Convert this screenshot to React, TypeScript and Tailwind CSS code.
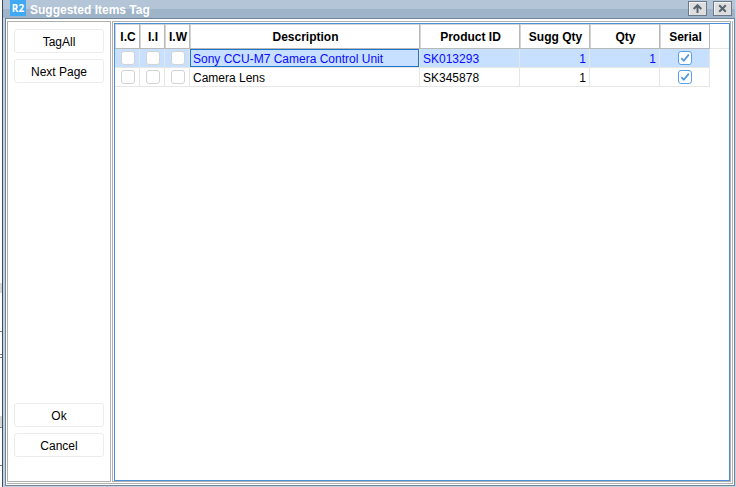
import type { ReactNode } from "react";

type Item = {
  description: string;
  productId: string;
  suggested: string;
  quantity: string;
  selected: boolean;
};

const items: Item[] = [
  { description: "Sony CCU-M7 Camera Control Unit", productId: "SK013293", suggested: "1", quantity: "1", selected: true },
  { description: "Camera Lens", productId: "SK345878", suggested: "1", quantity: "", selected: false },
];

const columns = [
  { title: "I.C", width: "w-[25px]" },
  { title: "I.I", width: "w-[25px]" },
  { title: "I.W", width: "w-[25px]" },
  { title: "Description", width: "w-[230px]" },
  { title: "Product ID", width: "w-[100px]" },
  { title: "Sugg Qty", width: "w-[70px]" },
  { title: "Qty", width: "w-[70px]" },
  { title: "Serial", width: "w-[50px]" },
];

function WindowButton({ label, children }: { label: string; children: ReactNode }) {
  return (
    <button
      type="button"
      aria-label={label}
      className="flex h-[15px] w-[19px] items-center justify-center border border-[#69788a] bg-[#dedede] shadow-[inset_1px_1px_0_#f3f3f3]"
    >
      {children}
    </button>
  );
}

function SideButton({ children }: { children: ReactNode }) {
  return (
    <button type="button" className="h-6 w-full rounded-[3px] border border-[#ececec] bg-white pt-px text-center">
      {children}
    </button>
  );
}

function Tick({ label, checked = false }: { label: string; checked?: boolean }) {
  return (
    <span className="relative mx-auto block size-3.5">
      <input
        type="checkbox"
        aria-label={label}
        defaultChecked={checked}
        className="peer block size-3.5 appearance-none rounded-[3px] border border-[#d3d3d3] bg-white checked:border-[#5a9fe6]"
      />
      <svg
        viewBox="0 0 14 14"
        className="pointer-events-none absolute inset-0 hidden size-3.5 peer-checked:block"
        fill="none"
        stroke="#4b97e3"
        strokeWidth="1.7"
      >
        <path d="M3.3 7.2 L5.8 9.8 L10.8 3.6" />
      </svg>
    </span>
  );
}

function ItemRow({ item }: { item: Item }) {
  const cell = "border-r border-b border-[#e6e6e6]";
  return (
    <tr className={item.selected ? "h-[19px] bg-[#c7e0ff] text-[#0a0aff]" : "h-[19px]"}>
      <td className={`${cell} p-0 pl-0.5`}><Tick label={`I.C ${item.description}`} /></td>
      <td className={`${cell} p-0 pl-0.5`}><Tick label={`I.I ${item.description}`} /></td>
      <td className={`${cell} p-0 pl-0.5`}><Tick label={`I.W ${item.description}`} /></td>
      <td className={`${cell} p-0 pt-px pl-[3px] ${item.selected ? "shadow-[inset_0_0_0_1px_#1f74c9]" : ""}`}>{item.description}</td>
      <td className={`${cell} p-0 pt-px pl-[3px]`}>{item.productId}</td>
      <td className={`${cell} p-0 pt-px pr-[3px] text-right`}>{item.suggested}</td>
      <td className={`${cell} p-0 pt-px pr-[3px] text-right`}>{item.quantity}</td>
      <td className={`${cell} p-0`}><Tick label={`Serial ${item.description}`} checked /></td>
    </tr>
  );
}

function BackgroundEdge() {
  return (
    <div className="flex w-0.5 shrink-0 flex-col bg-white" aria-hidden="true">
      <div className="h-[283px]" />
      <div className="h-2.5 bg-[#d8d8d8]" />
      <div className="h-[38px]" />
      <div className="h-px bg-[#777]" />
      <div className="h-[22px]" />
      <div className="h-1 border-y border-[#777]" />
      <div className="h-[58px]" />
      <div className="h-3 border-b border-[#888] bg-[#d8d8d8]" />
      <div className="h-[37px]" />
      <div className="h-px bg-[#777]" />
    </div>
  );
}

export default function App() {
  return (
    <div className="flex h-screen overflow-hidden bg-white font-['Liberation_Sans',Arial,sans-serif] text-[12px] leading-4 text-black">
      <BackgroundEdge />
      <main className="flex min-w-0 grow flex-col border-l border-[#3c4a5c] bg-[#c3d3e2] pr-px pb-px">
        <header className="flex h-[18px] shrink-0 items-start bg-linear-to-b from-[#b3c5d6] from-50% to-[#9fb3c9] to-50% pr-[3px] pl-[7px]">
          <div className="h-4 w-4 shrink-0 bg-[#3fa9f5] text-center font-['Open_Sans',sans-serif] text-[10px] font-bold text-white">R2</div>
          <h1 className="grow pt-0.5 pl-1 text-[12px] font-bold text-white">Suggested Items Tag</h1>
          <div className="flex gap-1.5 pt-px">
            <WindowButton label="Maximize">
              <svg viewBox="0 0 9 9" className="size-[9px]" fill="none" stroke="#56636f" strokeWidth="2">
                <path d="M4.5 9 V1.5 M0.7 5 L4.5 1.2 L8.3 5" />
              </svg>
            </WindowButton>
            <WindowButton label="Close">
              <svg viewBox="0 0 9 9" className="size-[9px]" fill="none" stroke="#56636f" strokeWidth="2">
                <path d="M1.2 1.2 L7.8 7.8 M7.8 1.2 L1.2 7.8" />
              </svg>
            </WindowButton>
          </div>
        </header>
        <div className="ml-0.5 flex min-h-0 grow border border-[#718397] bg-white pt-0.5 pr-px pb-px pl-px">
          <div className="flex min-w-0 grow gap-px border-r border-b border-[#b0b0b0] pr-px pb-px">
            <aside className="flex w-[104px] shrink-0 flex-col border border-[#b0b0b0] px-1.5 pt-[7px] pb-6">
              <div className="flex flex-col gap-1.5">
                <SideButton>TagAll</SideButton>
                <SideButton>Next Page</SideButton>
              </div>
              <div className="mt-auto flex flex-col gap-1.5">
                <SideButton>Ok</SideButton>
                <SideButton>Cancel</SideButton>
              </div>
            </aside>
            <section className="flex min-w-0 grow border border-[#b0b0b0] pt-px pl-px">
              <div className="min-w-0 grow border border-[#4a8fd8]">
                <div className="bg-[linear-gradient(#e6e6e6,#e6e6e6)] bg-[length:100%_1px] bg-[position:0_24px] bg-no-repeat">
                  <table className="w-[595px] table-fixed border-separate border-spacing-0">
                    <thead>
                      <tr className="h-[25px]">
                        {columns.map((column) => (
                          <th key={column.title} scope="col" className={`${column.width} border-r border-b border-[#b8b8b8] p-0 pt-px pl-0.5 text-center font-bold whitespace-nowrap shadow-[inset_1px_1px_0_#d4d4d4]`}>
                            {column.title}
                          </th>
                        ))}
                      </tr>
                    </thead>
                    <tbody>
                      {items.map((item) => (
                        <ItemRow key={item.productId} item={item} />
                      ))}
                    </tbody>
                  </table>
                </div>
              </div>
            </section>
          </div>
        </div>
      </main>
    </div>
  );
}
